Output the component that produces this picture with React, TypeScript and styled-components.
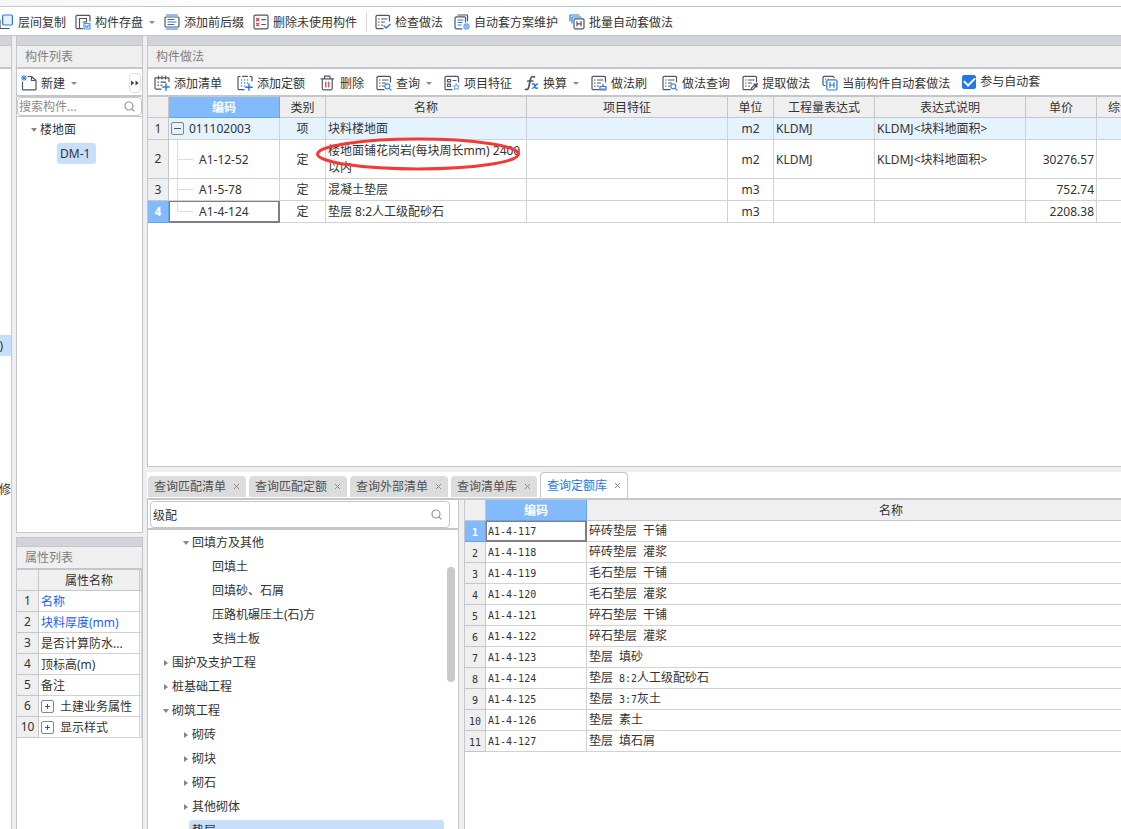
import React from "react";
import styled, { createGlobalStyle, css } from "styled-components";

const c = {
  line: "#c3c6cb",
  grid: "#d2d2d2",
  head: "#efefef",
  strip: "#d3d4da",
  text: "#333333",
  muted: "#808080",
  blue: "#2478e5",
  active: "#82bafb",
  activeLine: "#62a6f3",
  select: "#c8dffb",
  ink: "#4f5566",
};

const Global = createGlobalStyle`
  * { box-sizing: border-box; }
  body {
    margin: 0;
    background: #fff;
    color: ${c.text};
    font: 12px/16px "Noto Sans", "Noto Sans CJK SC", sans-serif;
  }
  button, input { font: inherit; color: inherit; }
  button { border: 0; padding: 0; background: none; white-space: nowrap; cursor: pointer; }
`;

/* ---------- frame ---------- */

const Shell = styled.div`
  display: flex;
  flex-direction: column;
  height: 100vh;
  overflow: hidden;
`;

const TopEdge = styled.div`
  flex: none;
  height: 7px;
  border-bottom: 1px solid ${c.line};
  background: linear-gradient(90deg, #f6f6f6, #fdfdfd 18%, #fff);
`;

const MainToolbar = styled.header`
  flex: none;
  display: flex;
  align-items: center;
  height: 29px;
  padding-top: 2px;
  border-bottom: 1px solid ${c.line};
  white-space: nowrap;
`;

const Group = styled.div<{ $gap: number; $divided?: boolean }>`
  display: flex;
  align-items: center;
  gap: ${(p) => p.$gap}px;
  ${(p) =>
    p.$divided &&
    css`
      margin-left: 9px;
      padding: 1px 0 1px 8px;
      border-left: 1px solid #d8d8d8;
    `}
`;

const ToolButton = styled.button`
  display: flex;
  align-items: center;
  gap: 4px;
  svg {
    flex: none;
  }
`;

const ToolText = styled.span`
  padding-top: 2px;
`;

const Caret = styled.span`
  margin-left: 2px;
  border: 3px solid transparent;
  border-top-color: #8a8a8a;
  border-bottom-width: 0;
`;

const Body = styled.main`
  flex: 1;
  min-height: 0;
  display: grid;
  grid-template-columns: 12px 127px minmax(0, 1fr);
  column-gap: 4px;
  background: ${c.head};
`;

const LeftColumn = styled.div`
  display: grid;
  grid-template-rows: minmax(0, 1fr) 292px;
  row-gap: 4px;
  min-height: 0;
`;

const RightColumn = styled.div`
  display: grid;
  grid-template-rows: minmax(0, 1fr) 357px;
  row-gap: 5px;
  min-height: 0;
`;

const Panel = styled.section<{ $right?: boolean; $bottom?: boolean }>`
  display: flex;
  flex-direction: column;
  min-height: 0;
  overflow: hidden;
  background: #fff;
  border-left: 1px solid ${c.line};
  border-right: ${(p) => (p.$right ? `1px solid ${c.line}` : 0)};
  border-bottom: ${(p) => (p.$bottom ? `1px solid ${c.line}` : 0)};
`;

const Strip = styled.div<{ $top?: boolean }>`
  flex: none;
  height: 10px;
  background: ${c.strip};
  border-bottom: 1px solid ${c.line};
  border-top: ${(p) => (p.$top ? `1px solid ${c.line}` : 0)};
`;

const Title = styled.h2`
  flex: none;
  height: 23px;
  margin: 0;
  padding: 3px 8px 0;
  border-bottom: 2px solid ${c.line};
  background: ${c.head};
  color: ${c.muted};
  font-size: 12px;
  font-weight: 400;
  white-space: nowrap;
`;

const PanelToolbar = styled.div<{ $gap?: number }>`
  flex: none;
  display: flex;
  align-items: center;
  gap: ${(p) => p.$gap ?? 0}px;
  height: 28px;
  padding-top: 2px;
  padding-left: ${(p) => (p.$gap ? 6 : 4)}px;
  border-bottom: 2px solid ${c.line};
  white-space: nowrap;
`;

const MoreButton = styled.button`
  display: grid;
  place-items: center;
  width: 12px;
  height: 20px;
  margin-left: auto;
  margin-right: 1px;
  border: 1px solid #dcdfe4;
  border-radius: 4px;
`;

/* ---------- far left sliver ---------- */

const Sliver = styled.aside`
  display: flex;
  flex-direction: column;
  overflow: hidden;
  background: #fff;
  border-right: 1px solid ${c.line};
`;

const SliverItem = styled.div<{ $selected?: boolean; $top: number }>`
  display: flex;
  justify-content: flex-end;
  align-items: center;
  height: 21px;
  margin-top: ${(p) => p.$top}px;
  padding-right: ${(p) => (p.$selected ? 8 : 0)}px;
  background: ${(p) => (p.$selected ? c.select : "transparent")};
`;

/* ---------- search ---------- */

const SearchBox = styled.label<{ $large?: boolean }>`
  flex: none;
  display: flex;
  align-items: center;
  height: ${(p) => (p.$large ? 27 : 19)}px;
  margin: ${(p) => (p.$large ? "1px 8px 0 2px" : "0")};
  padding: ${(p) => (p.$large ? "0 7px 0 2px" : "0 6px 0 1px")};
  border: 1px solid ${c.line};
  border-radius: 4px;
  background: #fff;
  input {
    flex: 1;
    min-width: 0;
    height: 100%;
    padding: 0;
    border: 0;
    outline: 0;
    background: none;
  }
  input::placeholder {
    color: #8c8c8c;
    opacity: 1;
  }
`;

/* ---------- tree ---------- */

const Tree = styled.div`
  flex: 1;
  min-height: 0;
  overflow: hidden;
  border-top: 1px solid ${c.line};
`;

const TreeRow = styled.div<{ $level: number; $base: number }>`
  display: flex;
  align-items: center;
  height: 24px;
  padding-left: ${(p) => p.$base + p.$level * 20}px;
  white-space: nowrap;
`;

const Arrow = styled.span<{ $state?: "open" | "closed" }>`
  flex: none;
  display: grid;
  place-items: center;
  width: 7px;
  height: 9px;
  padding-top: 2px;
  &::before {
    content: "";
    ${(p) =>
      p.$state === "open" &&
      css`
        border: 3px solid transparent;
        border-top: 4px solid #858585;
        border-bottom: 0;
      `}
    ${(p) =>
      p.$state === "closed" &&
      css`
        border: 3px solid transparent;
        border-left: 4px solid #858585;
        border-right: 0;
      `}
  }
`;

const TreeLabel = styled.span<{ $selected?: boolean; $fill?: boolean }>`
  flex: ${(p) => (p.$fill ? 1 : "none")};
  height: 21px;
  padding: 3px 6px 2px 3px;
  border-radius: 3px;
  margin-right: 14px;
  background: ${(p) => (p.$selected ? c.select : "transparent")};
`;

/* ---------- tables ---------- */

const GridArea = styled.div`
  flex: 1;
  min-width: 0;
  min-height: 0;
  overflow: hidden;
  background: #fff;
`;

const Table = styled.table<{ $width?: number }>`
  table-layout: fixed;
  width: ${(p) => (p.$width ? `${p.$width}px` : "100%")};
  border-collapse: separate;
  border-spacing: 0;
`;

const Th = styled.th<{ $active?: boolean }>`
  height: 21px;
  padding: 2px 0 0;
  overflow: hidden;
  background: ${(p) => (p.$active ? c.active : c.head)};
  color: ${(p) => (p.$active ? "#fff" : c.text)};
  border-right: 1px solid ${(p) => (p.$active ? c.activeLine : c.line)};
  border-bottom: 1px solid ${(p) => (p.$active ? c.activeLine : c.line)};
  font-weight: ${(p) => (p.$active ? 700 : 400)};
  white-space: nowrap;
`;

const Tr = styled.tr<{ $h: number; $tint?: boolean }>`
  height: ${(p) => p.$h}px;
  background: ${(p) => (p.$tint ? "#e5f3ff" : "#fff")};
`;

const Td = styled.td<{
  $align?: "left" | "center" | "right";
  $active?: boolean;
  $link?: boolean;
}>`
  padding: 0 2px;
  text-align: ${(p) => p.$align ?? "left"};
  color: ${(p) => (p.$link ? "#1b5cff" : "inherit")};
  border-right: 1px solid ${(p) => (p.$active ? "#7f7f7f" : c.grid)};
  border-bottom: 1px solid ${(p) => (p.$active ? "#7f7f7f" : c.grid)};
  box-shadow: ${(p) => (p.$active ? "inset 0 0 0 1px #7f7f7f" : "none")};
  line-height: 17px;
  white-space: nowrap;
`;

const branchLines = {
  mid: css`
    background-image: linear-gradient(#dcdcdc, #dcdcdc), linear-gradient(#dcdcdc, #dcdcdc);
    background-repeat: no-repeat;
    background-position: 8px 0, 9px 50%;
    background-size: 1px 100%, 15px 1px;
  `,
  end: css`
    background-image: linear-gradient(#dcdcdc, #dcdcdc), linear-gradient(#dcdcdc, #dcdcdc);
    background-repeat: no-repeat;
    background-position: 8px 0, 9px 50%;
    background-size: 1px 50%, 15px 1px;
  `,
};

const CodeTd = styled(Td)<{ $branch?: "mid" | "end" }>`
  padding-left: ${(p) => (p.$branch ? 30 : 2)}px;
  ${(p) => p.$branch && branchLines[p.$branch]}
`;

const NumTh = styled.th<{ $active?: boolean; $low?: boolean }>`
  padding: ${(p) => (p.$low ? "2px 0 0" : "0")};
  background: ${(p) => (p.$active ? c.active : c.head)};
  color: ${(p) => (p.$active ? "#fff" : c.text)};
  border-right: 1px solid ${(p) => (p.$active ? c.activeLine : c.line)};
  border-bottom: 1px solid ${(p) => (p.$active ? c.activeLine : c.line)};
  font-weight: ${(p) => (p.$active ? 700 : 400)};
`;

const Inline = styled.div<{ $gap: number }>`
  display: flex;
  align-items: center;
  gap: ${(p) => p.$gap}px;
`;

const Toggle = styled.button`
  display: grid;
  place-items: center;
  width: 13px;
  height: 13px;
  border: 1px solid #858585;
  border-radius: 2px;
`;

const Marked = styled.div`
  position: relative;
  svg {
    position: absolute;
    left: -13px;
    top: -6px;
    pointer-events: none;
  }
`;

const Mono = styled.span<{ $bold?: boolean }>`
  font-family: "DejaVu Sans Mono", monospace;
  font-size: 10px;
  line-height: 16px;
  font-weight: ${(p) => (p.$bold ? 700 : 400)};
`;

/* ---------- checkbox ---------- */

const CheckLabel = styled.label`
  display: flex;
  align-items: center;
  gap: 4px;
  padding-bottom: 3px;
  input {
    appearance: none;
    display: grid;
    place-items: center;
    width: 14px;
    height: 14px;
    margin: 0;
    border-radius: 2px;
    background: #fff;
    border: 1px solid ${c.blue};
  }
  input:checked {
    background: ${c.blue};
  }
  input:checked::after {
    content: "";
    width: 9px;
    height: 5px;
    border-left: 2px solid #fff;
    border-bottom: 2px solid #fff;
    transform: translateY(-1px) rotate(-45deg);
  }
`;

/* ---------- lower right ---------- */

const Lower = styled.div`
  display: flex;
  flex-direction: column;
  min-height: 0;
  background: #fff;
`;

const Tabs = styled.div`
  flex: none;
  display: flex;
  align-items: flex-end;
  gap: 3px;
  height: 28px;
  padding-left: 1px;
  border-bottom: 2px solid ${c.line};
`;

const Tab = styled.div<{ $active?: boolean }>`
  display: flex;
  align-items: center;
  gap: 7px;
  height: ${(p) => (p.$active ? 26 : 21)}px;
  margin-bottom: ${(p) => (p.$active ? 0 : 1)}px;
  padding: 0 6px;
  border: ${(p) => (p.$active ? `1px solid ${c.line}` : 0)};
  border-bottom: 0;
  border-radius: 4px 4px 0 0;
  background: ${(p) => (p.$active ? "#fff" : "#dcdcdc")};
  color: ${(p) => (p.$active ? c.blue : "#505050")};
  button {
    display: grid;
    place-items: center;
  }
`;

const LowerBody = styled.div`
  flex: 1;
  min-height: 0;
  display: grid;
  grid-template-columns: 312px minmax(0, 1fr);
  column-gap: 5px;
  background: ${c.head};
`;

const SearchArea = styled.div`
  flex: none;
  height: 29px;
  border-bottom: 1px solid ${c.line};
`;

const TreeScroll = styled.div`
  flex: 1;
  display: flex;
  min-height: 0;
  overflow: hidden;
  border-top: 1px solid ${c.line};
`;

const TreeBody = styled.div`
  flex: 1;
  min-width: 0;
`;

const Scrollbar = styled.div`
  flex: none;
  width: 8px;
  height: 115px;
  margin: 37px 3px 0 -11px;
  border-radius: 4px;
  background: #c9c9c9;
`;

/* ---------- icons ---------- */

const Svg = ({ children, w = 16 }: { children: React.ReactNode; w?: number }) => (
  <svg
    width={w}
    height={16}
    viewBox={`${16 - w} 0 ${w} 16`}
    fill="none"
    stroke={c.ink}
    strokeWidth={1.2}
    strokeLinecap="round"
    strokeLinejoin="round"
    aria-hidden
  >
    {children}
  </svg>
);

const Frame = () => <path d="M14.5 7V2.5a1.2 1.2 0 0 0-1.2-1.2H2.2A1.2 1.2 0 0 0 1 2.5v11a1.2 1.2 0 0 0 1.2 1.2H8" />;
const Lines = () => <path d="M3.500 5h.6M6.500 5h5.500M3.500 8h.6M6.500 8h3M3.500 11h.6M6.500 11h1" />;

const IconCopy = () => (
  <Svg w={14}>
    <path d="M2 6v7.500a1 1 0 0 0 1 1h8" />
    <rect x="4.600" y="1" width="9.800" height="10" rx="1.200" stroke={c.blue} fill="#e8f2ff" />
  </Svg>
);
const IconSave = () => (
  <Svg>
    <path d="M15 7V2.500a1.200 1.200 0 0 0-1.200-1.200H2.200A1.200 1.200 0 0 0 1 2.500v11a1.200 1.200 0 0 0 1.200 1.200H7.500M4.500 14.500V4.500h7V8H8" />
    <path d="M9 9.500h6V15H9z" stroke="#4f94ee" fill="#e3effe" />
    <path d="M10.500 12l1.400 1.200 1.800-1.700" stroke="#4f94ee" />
  </Svg>
);
const IconAffix = () => (
  <Svg>
    <path d="M2.500 1h11M2.500 15h11" stroke={c.blue} />
    <path d="M4 5.500h6M4 8h8M4 10.500h6" stroke={c.blue} />
    <rect x="1" y="3" width="14" height="10" rx="1" />
  </Svg>
);
const IconUnused = () => (
  <Svg>
    <rect x="1" y="1.200" width="14" height="13.600" rx="1.200" />
    <path d="M3.500 4.500L5.800 6.800M5.800 4.500L3.500 6.800M3.500 9.300l2.300 2.300M5.800 9.300l-2.300 2.300" stroke="#e02b3c" />
    <path d="M8.800 5.700h3.500M8.800 10.500h3.500" />
  </Svg>
);
const IconCheckDoc = () => (
  <Svg>
    <Frame />
    <Lines />
    <path d="M9 12l2.200 2L15 10.500" stroke={c.blue} strokeWidth={1.500} />
  </Svg>
);
const IconPlan = () => (
  <Svg>
    <path d="M4 1h9.500v6M8 14.800H2.200a1.200 1.200 0 0 1-1.200-1.200V4l1.200-1.200H10.500a1 1 0 0 1 1 1V8" />
    <path d="M4 6h5M4 8.500h4M4 11h3" stroke={c.blue} />
    <circle cx="12.500" cy="12.500" r="2.600" stroke="#6aa6f2" fill="#d6e7fd" />
    <circle cx="12.500" cy="12.500" r="0.800" stroke="#6aa6f2" />
  </Svg>
);
const IconBatch = () => (
  <Svg>
    <path d="M1 7V1h9M3 9V3h9" stroke={c.blue} />
    <rect x="5" y="4.800" width="10" height="10" rx="1.200" />
    <path d="M8 7.600v4.400M12 7.600v4.400M8 9.800h4" />
  </Svg>
);
const IconNew = () => (
  <Svg>
    <path d="M7 1.500h3.500l4.500 4V14a.9.9 0 0 1-.9.900H2.400a.9.9 0 0 1-.9-.9V7M10.500 1.500v4H15" />
    <path d="M1 1l4 4M5 1L1 5M3 .5v5M.5 3h5" stroke={c.blue} strokeWidth={1} />
  </Svg>
);
const IconAddList = () => (
  <Svg>
    <path d="M15 6.500V2.800H1V13a1.200 1.200 0 0 0 1.200 1.200H7M4.500 1v3M8 1v3M11.500 1v3M4 7.200h.6M7 7.200h4.500M4 10.200h.6M7 10.200h1" />
    <path d="M12 8.800v6.400M8.800 12h6.400" stroke={c.blue} strokeWidth={1.400} />
  </Svg>
);
const IconAddQuota = () => (
  <Svg>
    <path d="M15 6V2.500a1.200 1.200 0 0 0-1.200-1.200H13M3 1.300h-.8A1.200 1.200 0 0 0 1 2.500v11a1.200 1.200 0 0 0 1.200 1.200H7M5.500 1.300h5" />
    <path d="M4.500 5h.1M7.500 5h.1M10.500 5h.1M4.500 8h.1M7.500 8h.1M10.500 8h.1M4.500 11h.1M7.500 11h.1" stroke={c.blue} strokeWidth={1.300} />
    <path d="M12 9v6.300M8.800 12.200h6.400" stroke={c.blue} strokeWidth={1.400} />
  </Svg>
);
const IconTrash = () => (
  <Svg>
    <path d="M1 3.800h12.500M4.500 3.500V1.200h5.500v2.300M2.300 4v9.600a1.200 1.200 0 0 0 1.200 1.200h7.500a1.200 1.200 0 0 0 1.200-1.200V4" />
    <path d="M5.800 7v5M8.800 7v5" stroke="#e02b3c" />
  </Svg>
);
const IconQuery = () => (
  <Svg>
    <Frame />
    <Lines />
    <circle cx="11.300" cy="11.300" r="2.500" stroke="#3c88ec" />
    <path d="M13.300 13.300l1.700 1.700" stroke="#3c88ec" />
  </Svg>
);
const IconFeature = () => (
  <Svg>
    <Frame />
    <path d="M3.500 4.500h3v2.300h-3zM3.500 9.200h3v2.300h-3zM9 5.500h3" />
    <path d="M12.300 9l.9 1.900 2.100.2-1.600 1.400.5 2.100-1.900-1.100-1.900 1.100.5-2.100-1.600-1.400 2.100-.2z" stroke="#5b9df0" strokeWidth={1} />
  </Svg>
);
const IconFx = () => (
  <Svg w={15}>
    <path d="M11.500 2c-2.200-1.200-3.600 0-4.100 2.500L5.800 12c-.5 2.300-1.700 3-3.300 2.300M4.800 6h5" strokeWidth={1.700} />
    <path d="M9.500 9c1.500-.6 2 .2 2.300 2s1.200 2.800 2.500 2M14.500 9c-1.800 0-3.200 4.300-5 4.300" stroke={c.blue} strokeWidth={1.500} />
  </Svg>
);
const IconBrush = () => (
  <Svg>
    <Frame />
    <Lines />
    <path d="M9 15v-3.500h6V15zM12 9v2.500M11 13.500V15M13 13.500V15" stroke="#2f72cf" />
  </Svg>
);
const IconExtract = () => (
  <Svg>
    <Frame />
    <Lines />
    <path d="M9 15l.6-2 2.700-2.700 1.400 1.400L11 14.400z" />
    <path d="M12.500 9.200l2.300 2.300M13.700 10.300l1.300-1.300" strokeWidth={1.800} />
  </Svg>
);
const IconCurrent = () => (
  <Svg>
    <path d="M3 10.500H2.200A1.200 1.200 0 0 1 1 9.300V2.500A1.200 1.200 0 0 1 2.200 1.300h8.600A1.200 1.200 0 0 1 12 2.500M3.500 4h.1M6 4h.1M3.500 7h.1" />
    <rect x="4.800" y="4.800" width="10.200" height="10.200" rx="1.500" stroke={c.blue} />
    <path d="M8 7.700v4.500M12 7.700v4.500M8 10h4" stroke={c.blue} />
  </Svg>
);
const IconSearch = () => (
  <svg width="11" height="11" viewBox="0 0 11 11" fill="none" stroke="#999" strokeWidth="1.200" strokeLinecap="round" aria-hidden>
    <circle cx="5" cy="5" r="4" />
    <path d="M8 8l2 2" />
  </svg>
);
const IconMore = () => (
  <svg width="8" height="6" viewBox="0 0 8 6" fill="#42485a" aria-hidden>
    <path d="M0 .5L3.300 3 0 5.500zM4.500 .5L7.800 3 4.500 5.500z" />
  </svg>
);
const IconClose = () => (
  <svg width="7" height="7" viewBox="0 0 7 7" stroke="#8c8c8c" aria-hidden>
    <path d="M1 1l5 5M6 1L1 6" />
  </svg>
);
const IconSign = ({ plus }: { plus?: boolean }) => (
  <svg width="7" height="7" viewBox="0 0 7 7" stroke="#555" aria-hidden>
    <path d={plus ? "M1 3.500h5M3.500 1v5" : "M0 3.500h7"} />
  </svg>
);

/* ---------- data ---------- */

const workColumns = [21, 111, 46, 201, 201, 46, 101, 151, 71, 71];
const workHeads = ["编码", "类别", "名称", "项目特征", "单位", "工程量表达式", "表达式说明", "单价", "综合单价"];

type WorkRow = {
  h: number;
  code: string;
  branch?: "mid" | "end";
  kind: string;
  name: string[];
  unit: string;
  expr?: string;
  note?: string;
  price?: string;
};

const workRows: WorkRow[] = [
  { h: 22, code: "011102003", kind: "项", name: ["块料楼地面"], unit: "m2", expr: "KLDMJ", note: "KLDMJ<块料地面积>" },
  { h: 39, code: "A1-12-52", branch: "mid", kind: "定", name: ["楼地面铺花岗岩(每块周长mm) 2400", "以内"], unit: "m2", expr: "KLDMJ", note: "KLDMJ<块料地面积>", price: "30276.57" },
  { h: 22, code: "A1-5-78", branch: "mid", kind: "定", name: ["混凝土垫层"], unit: "m3", price: "752.74" },
  { h: 22, code: "A1-4-124", branch: "end", kind: "定", name: ["垫层 8:2人工级配砂石"], unit: "m3", price: "2208.38" },
];

const properties = [
  { n: 1, label: "名称", link: true },
  { n: 2, label: "块料厚度(mm)", link: true },
  { n: 3, label: "是否计算防水..." },
  { n: 4, label: "顶标高(m)" },
  { n: 5, label: "备注" },
  { n: 6, label: "土建业务属性", group: true },
  { n: 10, label: "显示样式", group: true },
];

const tabs = ["查询匹配清单", "查询匹配定额", "查询外部清单", "查询清单库", "查询定额库"];

const chapters: { label: string; level: number; state?: "open" | "closed"; selected?: boolean }[] = [
  { label: "回填方及其他", level: 1, state: "open" },
  { label: "回填土", level: 2 },
  { label: "回填砂、石屑", level: 2 },
  { label: "压路机碾压土(石)方", level: 2 },
  { label: "支挡土板", level: 2 },
  { label: "围护及支护工程", level: 0, state: "closed" },
  { label: "桩基础工程", level: 0, state: "closed" },
  { label: "砌筑工程", level: 0, state: "open" },
  { label: "砌砖", level: 1, state: "closed" },
  { label: "砌块", level: 1, state: "closed" },
  { label: "砌石", level: 1, state: "closed" },
  { label: "其他砌体", level: 1, state: "closed" },
  { label: "垫层", level: 1, selected: true },
];

const quotas = [
  "碎砖垫层 干铺",
  "碎砖垫层 灌浆",
  "毛石垫层 干铺",
  "毛石垫层 灌浆",
  "碎石垫层 干铺",
  "碎石垫层 灌浆",
  "垫层 填砂",
  "垫层 8:2人工级配砂石",
  "垫层 3:7灰土",
  "垫层 素土",
  "垫层 填石屑",
];

/* ---------- pieces ---------- */

const Tool = ({ icon, label, menu }: { icon: React.ReactNode; label: string; menu?: boolean }) => (
  <ToolButton type="button">
    {icon}
    <ToolText>{label}</ToolText>
    {menu && <Caret />}
  </ToolButton>
);

/* Half-width runs take the monospaced face, the rest stays in the page face. */
const MixedText = ({ value }: { value: string }) => (
  <>
    {value.split(/([ -~]+)/).map((part, i) => (i % 2 ? <Mono key={i}>{part}</Mono> : part))}
  </>
);

const WorkTable = () => (
  <Table $width={workColumns.reduce((a, b) => a + b)}>
    <colgroup>
      {workColumns.map((w, i) => (
        <col key={i} style={{ width: w }} />
      ))}
    </colgroup>
    <thead>
      <tr>
        <Th />
        {workHeads.map((h, i) => (
          <Th key={h} $active={i === 0}>
            {h}
          </Th>
        ))}
      </tr>
    </thead>
    <tbody>
      {workRows.map((r, i) => (
        <Tr key={r.code} $h={r.h} $tint={i === 0}>
          <NumTh $active={i === 3}>{i + 1}</NumTh>
          <CodeTd $branch={r.branch} $active={i === 3}>
            {r.branch ? (
              r.code
            ) : (
              <Inline $gap={5}>
                <Toggle type="button" aria-label="折叠">
                  <IconSign />
                </Toggle>
                {r.code}
              </Inline>
            )}
          </CodeTd>
          <Td $align="center">{r.kind}</Td>
          <Td>
            {r.name.length > 1 ? (
              <Marked>
                {r.name.map((line) => (
                  <div key={line}>{line}</div>
                ))}
                <svg width="206" height="36" viewBox="0 0 206 36" fill="none" aria-hidden>
                  <ellipse cx="103" cy="18" rx="100.500" ry="15" stroke="#f23a36" strokeWidth="3" />
                </svg>
              </Marked>
            ) : (
              r.name[0]
            )}
          </Td>
          <Td />
          <Td $align="center">{r.unit}</Td>
          <Td>{r.expr}</Td>
          <Td>{r.note}</Td>
          <Td $align="right">{r.price}</Td>
          <Td />
        </Tr>
      ))}
    </tbody>
  </Table>
);

const PropertyTable = () => (
  <Table>
    <colgroup>
      <col style={{ width: 22 }} />
      <col />
      <col style={{ width: 2 }} />
    </colgroup>
    <thead>
      <tr>
        <Th />
        <Th>属性名称</Th>
        <Th />
      </tr>
    </thead>
    <tbody>
      {properties.map((p) => (
        <Tr key={p.n} $h={21}>
          <NumTh>{p.n}</NumTh>
          <Td $link={p.link}>
            {p.group ? (
              <Inline $gap={6}>
                <Toggle type="button" aria-label={p.label}>
                  <IconSign plus />
                </Toggle>
                {p.label}
              </Inline>
            ) : (
              p.label
            )}
          </Td>
          <Td />
        </Tr>
      ))}
    </tbody>
  </Table>
);

const QuotaTable = () => (
  <Table $width={731}>
    <colgroup>
      <col style={{ width: 21 }} />
      <col style={{ width: 101 }} />
      <col />
    </colgroup>
    <thead>
      <tr>
        <Th />
        <Th $active>编码</Th>
        <Th>名称</Th>
      </tr>
    </thead>
    <tbody>
      {quotas.map((name, i) => (
        <Tr key={name} $h={21}>
          <NumTh $active={i === 0} $low>
            <Mono $bold={i === 0}>{i + 1}</Mono>
          </NumTh>
          <Td $active={i === 0}>
            <Mono>A1-4-{117 + i}</Mono>
          </Td>
          <Td>
            <MixedText value={name} />
          </Td>
        </Tr>
      ))}
    </tbody>
  </Table>
);

export default function App() {
  return (
    <>
      <Global />
      <Shell>
        <TopEdge />
        <MainToolbar>
          <Group $gap={9}>
            <Tool icon={<IconCopy />} label="层间复制" />
            <Tool icon={<IconSave />} label="构件存盘" menu />
            <Tool icon={<IconAffix />} label="添加前后缀" />
            <Tool icon={<IconUnused />} label="删除未使用构件" />
          </Group>
          <Group $gap={11} $divided>
            <Tool icon={<IconCheckDoc />} label="检查做法" />
            <Tool icon={<IconPlan />} label="自动套方案维护" />
            <Tool icon={<IconBatch />} label="批量自动套做法" />
          </Group>
        </MainToolbar>

        <Body>
          <Sliver>
            <Strip />
            <Title as="div" />
            <SliverItem $selected $top={266}>
              )
            </SliverItem>
            <SliverItem $top={123}>修</SliverItem>
          </Sliver>

          <LeftColumn>
            <Panel $right $bottom>
              <Strip />
              <Title>构件列表</Title>
              <PanelToolbar>
                <Tool icon={<IconNew />} label="新建" menu />
                <MoreButton type="button" aria-label="更多">
                  <IconMore />
                </MoreButton>
              </PanelToolbar>
              <SearchBox>
                <input placeholder="搜索构件..." aria-label="搜索构件" />
                <IconSearch />
              </SearchBox>
              <Tree role="tree">
                <TreeRow $level={0} $base={13} role="treeitem">
                  <Arrow $state="open" />
                  <TreeLabel>楼地面</TreeLabel>
                </TreeRow>
                <TreeRow $level={1} $base={13} role="treeitem">
                  <Arrow />
                  <TreeLabel $selected>DM-1</TreeLabel>
                </TreeRow>
              </Tree>
            </Panel>
            <Panel $right>
              <Strip $top />
              <Title>属性列表</Title>
              <PropertyTable />
            </Panel>
          </LeftColumn>

          <RightColumn>
            <Panel $bottom>
              <Strip />
              <Title>构件做法</Title>
              <PanelToolbar $gap={12}>
                <Group $gap={15}>
                  <Tool icon={<IconAddList />} label="添加清单" />
                  <Tool icon={<IconAddQuota />} label="添加定额" />
                  <Tool icon={<IconTrash />} label="删除" />
                </Group>
                <Group $gap={12}>
                  <Tool icon={<IconQuery />} label="查询" menu />
                  <Tool icon={<IconFeature />} label="项目特征" />
                  <Tool icon={<IconFx />} label="换算" menu />
                </Group>
                <Group $gap={15}>
                  <Tool icon={<IconBrush />} label="做法刷" />
                  <Tool icon={<IconQuery />} label="做法查询" />
                </Group>
                <Group $gap={12}>
                  <Tool icon={<IconExtract />} label="提取做法" />
                  <Tool icon={<IconCurrent />} label="当前构件自动套做法" />
                  <CheckLabel>
                    <input type="checkbox" defaultChecked />
                    参与自动套
                  </CheckLabel>
                </Group>
              </PanelToolbar>
              <GridArea>
                <WorkTable />
              </GridArea>
            </Panel>

            <Lower>
              <Tabs role="tablist">
                {tabs.map((t, i) => (
                  <Tab key={t} $active={i === 4}>
                    <button type="button" role="tab" aria-selected={i === 4}>
                      {t}
                    </button>
                    <button type="button" aria-label={`关闭${t}`}>
                      <IconClose />
                    </button>
                  </Tab>
                ))}
              </Tabs>
              <LowerBody>
                <Panel $right>
                  <SearchArea>
                    <SearchBox $large>
                      <input defaultValue="级配" aria-label="查询定额" />
                      <IconSearch />
                    </SearchBox>
                  </SearchArea>
                  <TreeScroll>
                    <TreeBody role="tree">
                      {chapters.map((n) => (
                        <TreeRow key={n.label} $level={n.level} $base={14} role="treeitem">
                          <Arrow $state={n.state} />
                          <TreeLabel $selected={n.selected} $fill>
                            {n.label}
                          </TreeLabel>
                        </TreeRow>
                      ))}
                    </TreeBody>
                    <Scrollbar />
                  </TreeScroll>
                </Panel>
                <Panel>
                  <QuotaTable />
                </Panel>
              </LowerBody>
            </Lower>
          </RightColumn>
        </Body>
      </Shell>
    </>
  );
}
